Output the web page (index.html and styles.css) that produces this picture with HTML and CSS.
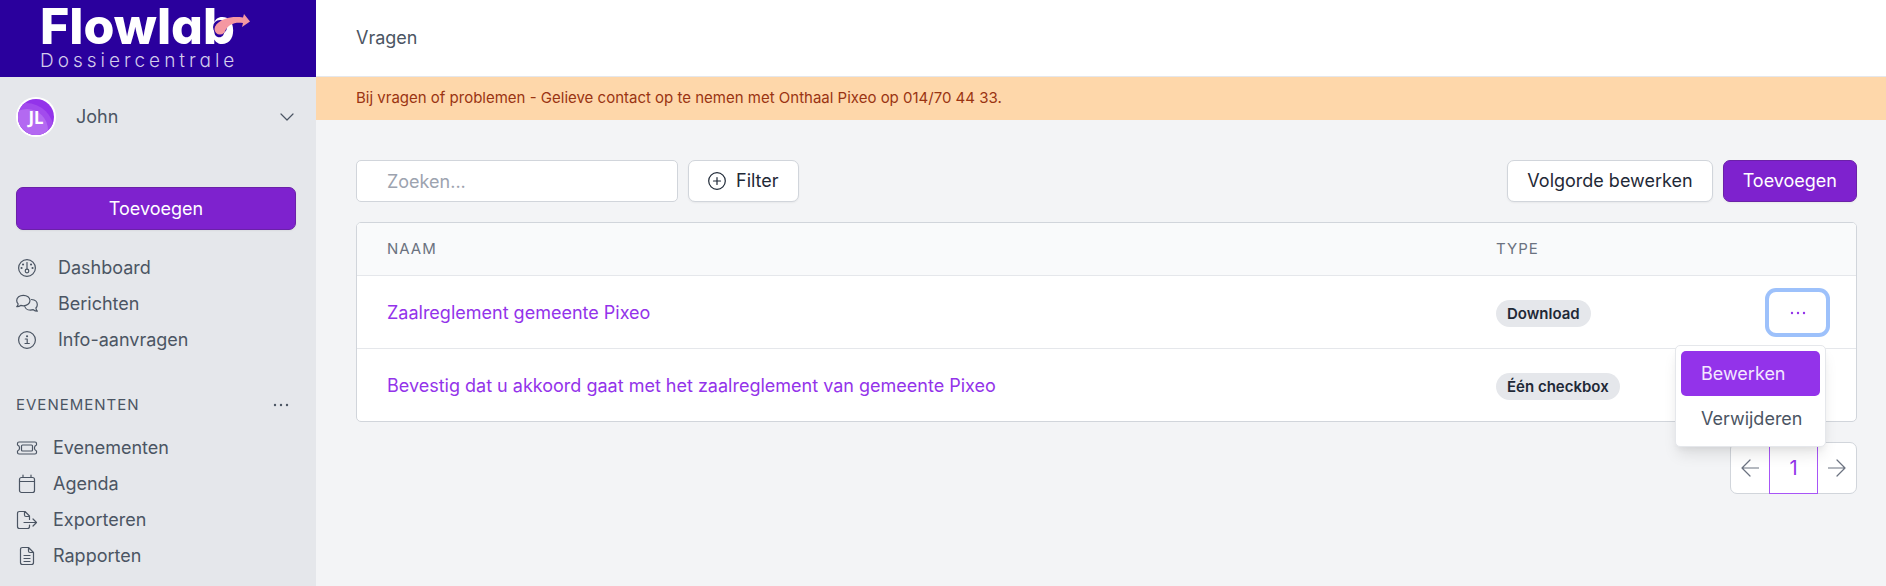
FILE: index.html
```html
<!DOCTYPE html>
<html lang="nl">
<head>
<meta charset="UTF-8">
<meta name="viewport" content="width=device-width, initial-scale=1">
<title>Vragen - Flowlab Dossiercentrale</title>
<link rel="stylesheet" href="styles.css">
</head>
<body>
	<div class="app">
		<aside class="sidebar">
			<a class="logo" href="#">
				<span class="logo-name">Flowlab
					<svg class="logo-arrow" viewBox="0 0 38 22" width="38" height="22" aria-hidden="true">
						<circle cx="8" cy="14" r="7" fill="#2a009d"/>
						<circle cx="8" cy="16" r="5.5" fill="#f598a2"/>
						<path d="M4 12C10 5 20 3 31 4.500L32 1L38 8.500L30 14L31 10C22 9 17 11 12 19Z" fill="#f598a2"/>
					</svg>
				</span>
				<span class="logo-sub">Dossiercentrale</span>
			</a>
			<button class="user" type="button">
				<svg class="avatar" viewBox="0 0 40 40" width="40" height="40" aria-hidden="true">
					<clipPath id="rond"><circle cx="20" cy="20" r="18"/></clipPath>
					<circle cx="20" cy="20" r="20" fill="#fff"/>
					<g clip-path="url(#rond)">
						<rect width="40" height="40" fill="#9333ea"/>
						<circle cx="10" cy="34" r="28" fill="#a24bed"/>
						<circle cx="11" cy="33" r="21" fill="#b369f1"/>
					</g>
					<text x="20" y="27" text-anchor="middle">JL</text>
				</svg>
				<span class="user-name">John</span>
				<svg class="icon" viewBox="0 0 14 8" width="14" height="8" aria-hidden="true"><path d="M1 1L7 7L13 1"/></svg>
			</button>
			<button class="btn btn-primary btn-block" type="button">Toevoegen</button>
			<nav class="menu">
				<a href="#">
					<svg class="icon" viewBox="0 0 22 20" width="22" height="20" aria-hidden="true">
						<circle cx="11" cy="10" r="8.4"/><circle cx="11" cy="13" r="1.8"/><path d="M11 4.5V11"/>
						<path class="dot" d="M5.5 10h.1M7 6.5h.1M15 6.5h.1M16.5 10h.1"/>
					</svg>
					Dashboard
				</a>
				<a href="#">
					<svg class="icon" viewBox="0 0 22 20" width="22" height="20" aria-hidden="true">
						<path d="M.7 12.6C1.700 11.700 2.100 10.700 2.100 9.900C1.200 8.900 .7 7.700 .7 6.500C.7 3.400 3.600 1.300 7.300 1.300S14 3.400 14 6.500S11 11.800 7.300 11.800C6.300 11.800 5.500 11.600 4.700 11.400C3.500 12.300 2.200 12.700 .7 12.600Z"/>
						<path d="M15.500 5.500C19 5.700 21.300 7.900 21.300 10.700C21.300 12 20.800 13.100 19.900 14C20 15.200 20.500 16.300 21.300 17.200C19.800 17.200 18.500 16.700 17.300 15.700C13.500 16.700 9.900 15.500 8.800 12.600"/>
					</svg>
					Berichten
				</a>
				<a href="#">
					<svg class="icon" viewBox="0 0 22 20" width="22" height="20" aria-hidden="true">
						<circle cx="11" cy="10" r="8.400"/><path d="M9.300 9H11.200V13.500M9 13.500H13.300"/><path class="dot" d="M11 6.200h.1"/>
					</svg>
					Info-aanvragen
				</a>
			</nav>
			<div class="menu-title">
				<h2>Evenementen</h2>
				<button class="more" type="button" aria-label="Meer">
					<svg viewBox="0 0 16 4" width="16" height="4" aria-hidden="true"><circle cx="2" cy="2" r="1.200"/><circle cx="8" cy="2" r="1.200"/><circle cx="14" cy="2" r="1.200"/></svg>
				</button>
			</div>
			<nav class="menu menu-sub">
				<a href="#">
					<svg class="icon" viewBox="0 0 22 20" width="22" height="20" aria-hidden="true">
						<path d="M3 4H19Q20.500 4 20.500 5.500V7A3.200 3.200 0 0 0 20.500 13V14.500Q20.500 16 19 16H3Q1.500 16 1.500 14.500V13A3.200 3.200 0 0 0 1.500 7V5.500Q1.500 4 3 4Z"/>
						<rect x="5.500" y="7" width="11" height="6" rx="1"/>
					</svg>
					Evenementen
				</a>
				<a href="#">
					<svg class="icon" viewBox="0 0 22 20" width="22" height="20" aria-hidden="true">
						<rect x="3.500" y="3.500" width="15" height="15" rx="2"/><path d="M3.500 7.500H18.500M7 1V3.500M15 1V3.500"/>
					</svg>
					Agenda
				</a>
				<a href="#">
					<svg class="icon" viewBox="0 0 22 20" width="22" height="20" aria-hidden="true">
						<path d="M13.500 9.500V6L9 1.500H3.500Q1.500 1.500 1.500 3.500V16.500Q1.500 18.500 3.500 18.500H11.500Q13.500 18.500 13.500 16.500V15M8.500 1.500V5Q8.500 6.500 10 6.500H13.500M8 12.500H20M17 9L20.500 12.500L17 16"/>
					</svg>
					Exporteren
				</a>
				<a href="#">
					<svg class="icon" viewBox="0 0 22 20" width="22" height="20" aria-hidden="true">
						<path d="M12.500 1.500H6.500Q4.500 1.500 4.500 3.500V16.500Q4.500 18.500 6.500 18.500H15.500Q17.500 18.500 17.500 16.500V6.500ZM12.500 1.500V5Q12.500 6.500 14 6.500H17.500M8 9.500H14M8 12.500H14M8 15.500H14"/>
					</svg>
					Rapporten
				</a>
			</nav>
		</aside>
		<main class="main">
			<header class="topbar"><h1>Vragen</h1></header>
			<p class="notice">Bij vragen of problemen - Gelieve contact op te nemen met Onthaal Pixeo op 014/70 44 33.</p>
			<div class="content">
				<div class="toolbar">
					<input class="search" type="search" placeholder="Zoeken..." aria-label="Zoeken">
					<button class="btn" type="button">
						<svg class="icon" viewBox="0 0 18 18" width="18" height="18" aria-hidden="true"><circle cx="9" cy="9" r="8.300"/><path d="M9 5.500V12.500M5.500 9H12.500"/></svg>
						Filter
					</button>
					<div class="toolbar-right">
						<button class="btn" type="button">Volgorde bewerken</button>
						<button class="btn btn-primary" type="button">Toevoegen</button>
					</div>
				</div>
				<div class="panel">
					<table class="list">
						<thead>
							<tr><th class="col-name">Naam</th><th class="col-type">Type</th><th class="col-actions"></th></tr>
						</thead>
						<tbody>
							<tr>
								<td><a href="#">Zaalreglement gemeente Pixeo</a></td>
								<td><span class="badge">Download</span></td>
								<td class="actions">
									<div class="dropdown">
										<button class="toggle" type="button" aria-label="Acties" aria-expanded="true">
											<svg viewBox="0 0 16 4" width="16" height="4" aria-hidden="true"><circle cx="2" cy="2" r="1.200"/><circle cx="8" cy="2" r="1.200"/><circle cx="14" cy="2" r="1.200"/></svg>
										</button>
										<div class="dropdown-menu">
											<a class="cur" href="#">Bewerken</a>
											<a href="#">Verwijderen</a>
										</div>
									</div>
								</td>
							</tr>
							<tr>
								<td><a href="#">Bevestig dat u akkoord gaat met het zaalreglement van gemeente Pixeo</a></td>
								<td><span class="badge">Één checkbox</span></td>
								<td></td>
							</tr>
						</tbody>
					</table>
				</div>
				<nav class="pages" aria-label="Paginering">
					<a href="#" aria-label="Vorige"><svg class="icon" viewBox="0 0 18 18" width="18" height="18" aria-hidden="true"><path d="M18 9H1M9 1L1 9L9 17"/></svg></a>
					<a class="cur" href="#">1</a>
					<a href="#" aria-label="Volgende"><svg class="icon" viewBox="0 0 18 18" width="18" height="18" aria-hidden="true"><path d="M0 9H17M9 1L17 9L9 17"/></svg></a>
				</nav>
			</div>
		</main>
	</div>
</body>
</html>
```
FILE: styles.css
```css
*{margin: 0;padding: 0;box-sizing: border-box;}
body{
	font: 18px/28px Inter,"Liberation Sans",sans-serif;
	color: #4b5563;
	background: #f3f4f6;
}
a{color: inherit;text-decoration: none;}
button,input{font: inherit;color: inherit;}
button{cursor: pointer;background: none;border: 0;}
h1,h2{font-size: inherit;font-weight: 400;}
.icon{
	flex: none;
	fill: none;
	stroke: currentColor;
	stroke-width: 1.2;
	stroke-linecap: round;
	stroke-linejoin: round;
}
.icon .dot{stroke-width: 2;}
.app{display: flex;min-height: 100vh;}

/* sidebar */
.sidebar{
	flex: none;
	width: 316px;
	background: #e5e7eb;
}
.logo{
	display: flex;
	flex-direction: column;
	height: 77px;
	padding: 4px 40px;
	background: #2a009d;
	color: #fff;
	font-feature-settings: "cv11";
}
.logo-name{
	position: relative;
	align-self: flex-start;
	font-size: 50px;
	font-weight: 800;
	line-height: 44px;
}
.logo-arrow{
	position: absolute;
	top: 9px;
	left: 172px;
}
.logo-sub{
	font-size: 19px;
	font-weight: 300;
	line-height: 26px;
	letter-spacing: 4px;
	color: #d4ccec;
}
.user{
	display: flex;
	align-items: center;
	width: 100%;
	padding: 20px 22px 20px 16px;
	text-align: left;
}
.avatar text{
	font: 700 17px "Noto Sans",sans-serif;
	fill: #fff;
}
.user-name{flex: 1;padding-left: 20px;}
.btn{
	display: inline-flex;
	align-items: center;
	justify-content: center;
	gap: 10px;
	height: 42px;
	padding: 0 19px;
	border: 1px solid #d1d5db;
	border-radius: 7px;
	background: #fff;
	color: #1f2937;
	box-shadow: 0 1px 2px rgba(0,0,0,.05);
}
.btn-primary{
	border-color: #6b21a8;
	background: #7e22ce;
	color: #fff;
}
.btn-block{
	display: flex;
	width: 280px;
	height: 43px;
	margin: 30px 16px 20px;
}
.menu a{
	display: flex;
	align-items: center;
	gap: 20px;
	height: 36px;
	padding: 0 16px;
}
.menu-sub a{gap: 15px;}
.menu-title{
	display: flex;
	align-items: center;
	justify-content: space-between;
	margin: 35px 0 13px;
	padding: 0 27px 0 16px;
}
.menu-title h2{
	font-size: 15px;
	line-height: 24px;
	letter-spacing: 1px;
	text-transform: uppercase;
}
.more,.toggle{display: flex;align-items: center;justify-content: center;}
.more svg,.toggle svg{fill: currentColor;}

/* main */
.main{flex: 1;min-width: 0;}
.topbar{
	display: flex;
	align-items: center;
	height: 77px;
	padding: 0 40px;
	border-bottom: 1px solid #e5e7eb;
	background: #fff;
}
.notice{
	padding: 9px 40px 11px;
	background: #fed7aa;
	color: #9a3412;
	font-size: 15px;
	line-height: 23px;
}
.content{padding: 40px 29px 40px 40px;}
.toolbar{display: flex;gap: 10px;margin-bottom: 20px;}
.toolbar-right{display: flex;gap: 10px;margin-left: auto;}
.search{
	width: 322px;
	height: 42px;
	padding: 0 30px;
	border: 1px solid #d1d5db;
	border-radius: 5px;
	background: #fff;
	outline: 0;
	appearance: none;
}
.search::placeholder{color: #9ca3af;opacity: 1;}
.panel{
	border: 1px solid #d1d5db;
	border-radius: 5px;
	background: #fff;
}
.list{
	width: 100%;
	border-collapse: collapse;
	table-layout: fixed;
}
.list th{
	height: 52px;
	padding: 0 30px;
	background: #f9fafb;
	color: #6b7280;
	font-size: 15px;
	font-weight: 400;
	letter-spacing: 1px;
	text-align: left;
	text-transform: uppercase;
}
.list th:first-child{border-top-left-radius: 4px;}
.list th:last-child{border-top-right-radius: 4px;}
.list tbody tr{border-top: 1px solid #e5e7eb;}
.list td{height: 73px;padding: 2px 30px 0;color: #9333ea;}
.col-type{width: 240px;}
.col-actions{width: 150px;}
.list .actions{text-align: right;}
.badge{
	display: inline-block;
	padding: 0 11px;
	border-radius: 14px;
	background: #e5e7eb;
	color: #1f2937;
	font-size: 15px;
	font-weight: 600;
	line-height: 27px;
}
.dropdown{position: relative;display: inline-block;vertical-align: middle;}
.toggle{
	width: 57px;
	height: 41px;
	border-radius: 7px;
	color: #9333ea;
	box-shadow: 0 0 0 4px #9dc1fb;
}
.dropdown-menu{
	position: absolute;
	top: 100%;
	right: 0;
	z-index: 1;
	width: 151px;
	margin-top: 12px;
	padding: 5px;
	border: 1px solid #e5e7eb;
	border-radius: 5px;
	background: #fff;
	box-shadow: 0 10px 15px -3px rgba(0,0,0,.1),0 4px 6px -2px rgba(0,0,0,.05);
	text-align: left;
}
.dropdown-menu a{
	display: block;
	padding: 0 20px;
	border-radius: 5px;
	color: #4b5563;
	line-height: 45px;
}
.dropdown-menu a.cur{background: #9333ea;color: #f3e8ff;}
.pages{
	display: flex;
	width: max-content;
	margin: 20px 0 0 auto;
	border: 1px solid #d1d5db;
	border-radius: 7px;
	background: #fff;
}
.pages a{
	display: flex;
	align-items: center;
	justify-content: center;
	width: 38px;
	height: 50px;
	color: #6b7280;
}
.pages a.cur{
	width: 49px;
	height: 52px;
	margin: -1px 0;
	border: 1px solid #a855f7;
	color: #9333ea;
	font-size: 20px;
}
```
